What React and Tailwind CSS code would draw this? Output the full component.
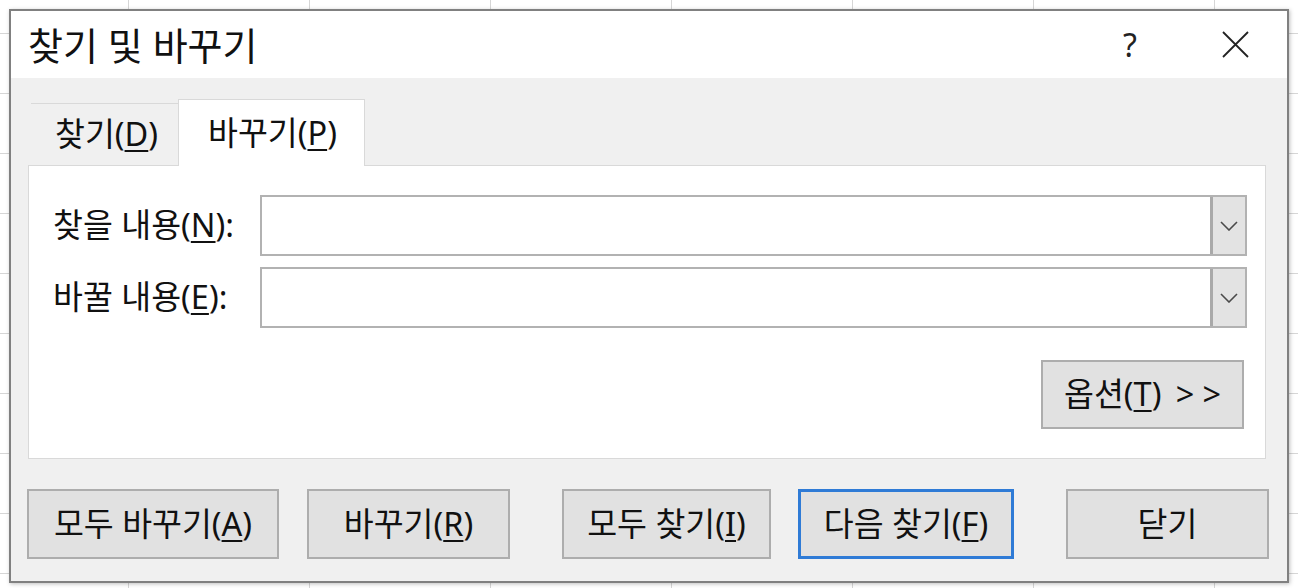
import React from "react";

const font = "font-['Noto_Sans','Noto_Sans_CJK_KR',sans-serif]";

function Key({ children }) {
  return <span className="underline decoration-[1.5px] underline-offset-[4px]">{children}</span>;
}

function Chevron() {
  return (
    <svg width="18" height="10" viewBox="0 0 18 10" fill="none">
      <polyline points="1,1 9,9 17,1" stroke="#4a4a4a" strokeWidth="1.6" />
    </svg>
  );
}

function ComboBox() {
  return (
    <div className="flex h-[61px] w-[987px] border-2 border-[#b2b2b2] bg-white">
      <div className="flex-1" />
      <div className="flex w-[35px] items-center justify-center border-l-[3px] border-[#a9a9a9] bg-[#e3e3e3]">
        <Chevron />
      </div>
    </div>
  );
}

function Button({ children, className = "", focused = false }) {
  return (
    <button
      className={
        "flex h-[70px] items-center justify-center bg-[#e1e1e1] text-[32.5px] text-[#111] " +
        (focused ? "border-[3px] border-[#2f7bd6] " : "border-2 border-[#adadad] ") +
        className
      }
    >
      <span>{children}</span>
    </button>
  );
}

export default function App() {
  return (
    <div
      className={
        "h-[588px] w-[1298px] overflow-hidden bg-white pl-[9px] pt-[9px] " +
        "[background-image:linear-gradient(to_right,#d6d6d6_1px,transparent_1px),linear-gradient(to_bottom,#d6d6d6_1px,transparent_1px)] " +
        "[background-size:181px_60px] [background-position:128px_33px] " +
        font
      }
    >
      <div className="flex h-[574px] w-[1280px] flex-col border-2 border-[#808080] bg-[#f0f0f0] shadow-[1px_1px_4px_rgba(0,0,0,0.25)]">
        {/* title bar */}
        <div className="flex h-[67px] items-center bg-white pl-[17px]">
          <span className="text-[38px] leading-none text-[#111]">찾기 및 바꾸기</span>
          <span className="ml-auto flex w-[40px] justify-center text-[32px] leading-none text-[#222]">?</span>
          <span className="ml-[65px] mr-[32px] flex w-[40px] justify-center">
            <svg width="27" height="27" viewBox="0 0 27 27">
              <path d="M1 1 L26 26 M26 1 L1 26" stroke="#222" strokeWidth="1.8" />
            </svg>
          </span>
        </div>

        {/* tabs */}
        <div className="ml-[20px] mt-[21px] flex items-end text-[32.5px] text-[#111]">
          <div className="flex h-[62px] w-[147px] items-center border-t border-[#d9d9d9] pl-[24px]">
            찾기(<Key>D</Key>)
          </div>
          <div className="relative z-10 -mb-px flex h-[67px] w-[187px] items-center border-x border-t border-[#d9d9d9] bg-white pl-[29px]">
            바꾸기(<Key>P</Key>)
          </div>
        </div>

        {/* panel */}
        <div className="ml-[17px] h-[294px] w-[1238px] border border-[#d9d9d9] bg-white pt-[29px] text-[32.5px] text-[#111]">
          <div className="flex items-center">
            <div className="w-[231px] pl-[24px]">
              찾을 내용(<Key>N</Key>):
            </div>
            <ComboBox />
          </div>
          <div className="mt-[11px] flex items-center">
            <div className="w-[231px] pl-[24px]">
              바꿀 내용(<Key>E</Key>):
            </div>
            <ComboBox />
          </div>
          <div className="mt-[32px] flex justify-end pr-[21px]">
            <button className="flex h-[69px] w-[203px] items-center justify-center border-2 border-[#adadad] bg-[#e1e1e1] text-[32.5px] text-[#111]">
              <span>
                옵션(<Key>T</Key>) <span className="ml-[6px]">&gt;</span>
                <span className="ml-[8px]">&gt;</span>
              </span>
            </button>
          </div>
        </div>

        {/* bottom buttons */}
        <div className="ml-[16px] mt-[30px] flex">
          <Button className="w-[252px]">
            모두 바꾸기(<Key>A</Key>)
          </Button>
          <Button className="ml-[28px] w-[203px]">
            바꾸기(<Key>R</Key>)
          </Button>
          <Button className="ml-[52px] w-[209px]">
            모두 찾기(<Key>I</Key>)
          </Button>
          <Button className="ml-[27px] w-[216px]" focused>
            다음 찾기(<Key>F</Key>)
          </Button>
          <Button className="ml-[52px] w-[203px]">닫기</Button>
        </div>
      </div>
    </div>
  );
}
